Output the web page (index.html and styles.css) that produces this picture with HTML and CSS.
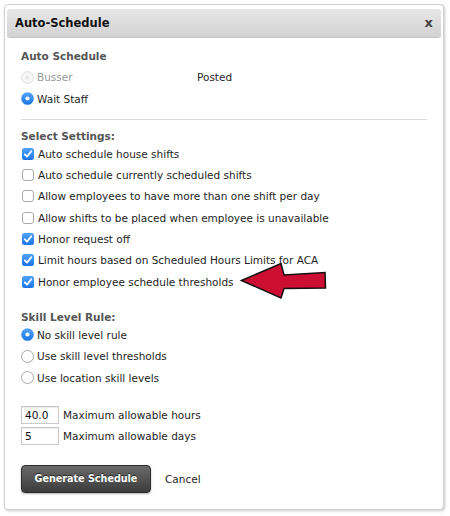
FILE: index.html
```html
<!DOCTYPE html>
<html>
<head>
<meta charset="utf-8">
<link rel="stylesheet" href="styles.css">
</head>
<body>
<div class="dialog">
  <div class="header">
    <span class="title">Auto-Schedule</span>
    <span class="close">x</span>
  </div>
  <div class="content">
    <h2 class="heading">Auto Schedule</h2>
    <div class="group first">
      <div class="row">
        <svg class="radio" viewBox="0 0 13 13"><circle cx="6.5" cy="6.5" r="6" fill="#f6f6f6" stroke="#e0e0e0"/><circle cx="6.5" cy="6.5" r="2" fill="#e8e8e8"/></svg>
        <span class="label muted wide">Busser</span>
        <span class="label">Posted</span>
      </div>
      <div class="row">
        <svg class="radio" viewBox="0 0 13 13"><defs><linearGradient id="rb" x1="0" y1="0" x2="0" y2="1"><stop offset="0" stop-color="#56a6fb"/><stop offset="1" stop-color="#1a74e6"/></linearGradient></defs><circle cx="6.5" cy="6.5" r="6.3" fill="url(#rb)"/><circle cx="6.5" cy="6.5" r="2.1" fill="#fff"/></svg>
        <span class="label">Wait Staff</span>
      </div>
    </div>
    <div class="divider"></div>
    <h2 class="heading">Select Settings:</h2>
    <div class="group">
      <div class="row"><svg class="check" viewBox="0 0 12 12"><defs><linearGradient id="cb" x1="0" y1="0" x2="0" y2="1"><stop offset="0" stop-color="#4fa2fa"/><stop offset="1" stop-color="#1c76e8"/></linearGradient></defs><rect x="0" y="0" width="12" height="12" rx="2.5" fill="url(#cb)"/><path d="M2.8 6.3 L5 8.6 L9.3 3.2" fill="none" stroke="#fff" stroke-width="1.8" stroke-linecap="round" stroke-linejoin="round"/></svg><span class="label">Auto schedule house shifts</span></div>
      <div class="row"><svg class="check" viewBox="0 0 12 12"><rect x="0.5" y="0.5" width="11" height="11" rx="2.5" fill="#fff" stroke="#a9a9a9"/></svg><span class="label">Auto schedule currently scheduled shifts</span></div>
      <div class="row"><svg class="check" viewBox="0 0 12 12"><rect x="0.5" y="0.5" width="11" height="11" rx="2.5" fill="#fff" stroke="#a9a9a9"/></svg><span class="label">Allow employees to have more than one shift per day</span></div>
      <div class="row"><svg class="check" viewBox="0 0 12 12"><rect x="0.5" y="0.5" width="11" height="11" rx="2.5" fill="#fff" stroke="#a9a9a9"/></svg><span class="label">Allow shifts to be placed when employee is unavailable</span></div>
      <div class="row"><svg class="check" viewBox="0 0 12 12"><rect x="0" y="0" width="12" height="12" rx="2.5" fill="url(#cb)"/><path d="M2.8 6.3 L5 8.6 L9.3 3.2" fill="none" stroke="#fff" stroke-width="1.8" stroke-linecap="round" stroke-linejoin="round"/></svg><span class="label">Honor request off</span></div>
      <div class="row"><svg class="check" viewBox="0 0 12 12"><rect x="0" y="0" width="12" height="12" rx="2.5" fill="url(#cb)"/><path d="M2.8 6.3 L5 8.6 L9.3 3.2" fill="none" stroke="#fff" stroke-width="1.8" stroke-linecap="round" stroke-linejoin="round"/></svg><span class="label">Limit hours based on Scheduled Hours Limits for ACA</span></div>
      <div class="row"><svg class="check" viewBox="0 0 12 12"><rect x="0" y="0" width="12" height="12" rx="2.5" fill="url(#cb)"/><path d="M2.8 6.3 L5 8.6 L9.3 3.2" fill="none" stroke="#fff" stroke-width="1.8" stroke-linecap="round" stroke-linejoin="round"/></svg><span class="label">Honor employee schedule thresholds</span></div>
    </div>
    <h2 class="heading skill">Skill Level Rule:</h2>
    <div class="group">
      <div class="row"><svg class="radio" viewBox="0 0 13 13"><circle cx="6.5" cy="6.5" r="6.3" fill="url(#rb)"/><circle cx="6.5" cy="6.5" r="2.1" fill="#fff"/></svg><span class="label">No skill level rule</span></div>
      <div class="row"><svg class="radio" viewBox="0 0 13 13"><circle cx="6.5" cy="6.5" r="6" fill="#fff" stroke="#a9a9a9"/></svg><span class="label">Use skill level thresholds</span></div>
      <div class="row"><svg class="radio" viewBox="0 0 13 13"><circle cx="6.5" cy="6.5" r="6" fill="#fff" stroke="#a9a9a9"/></svg><span class="label">Use location skill levels</span></div>
    </div>
    <div class="limits">
      <div class="limit-row"><span class="input">40.0</span><span class="label">Maximum allowable hours</span></div>
      <div class="limit-row"><span class="input">5</span><span class="label">Maximum allowable days</span></div>
    </div>
    <div class="actions">
      <span class="btn">Generate Schedule</span>
      <span class="cancel">Cancel</span>
    </div>
  </div>
</div>
<svg class="arrow" viewBox="0 0 450 516" width="450" height="516">
  <polygon points="241.5,280.5 281,263.5 284,275 325,272.5 325.5,288 284,288.5 281,298" fill="#cc0e33" stroke="#111" stroke-width="1.5" stroke-linejoin="miter"/>
</svg>
</body>
</html>
```

FILE: styles.css
```css
html, body {
  margin: 0;
  padding: 0;
  background: #fff;
}
body {
  font-family: "DejaVu Sans", Verdana, sans-serif;
  font-size: 10.5px;
  color: #1e1e1e;
  width: 450px;
  height: 516px;
  overflow: hidden;
  position: relative;
}
.dialog {
  margin: 4px 0 0 4px;
  width: 440px;
  height: 506px;
  box-sizing: border-box;
  border: 1px solid #d2d2d2;
  border-radius: 4px;
  box-shadow: 1px 1px 3px rgba(0, 0, 0, 0.22);
  padding: 4px 2px 0 2px;
  background: #fff;
}
.header {
  height: 29px;
  box-sizing: border-box;
  display: flex;
  align-items: center;
  justify-content: space-between;
  padding: 0 8px;
  background: linear-gradient(#e7e7e7, #d2d2d2);
  border-bottom: 1px solid #c4c4c4;
  border-radius: 3px;
}
.title {
  font-weight: bold;
  font-size: 11.5px;
  color: #111;
}
.close {
  font-weight: bold;
  font-size: 13px;
  color: #444;
  line-height: 1;
  margin-top: -1px;
}
.content {
  padding: 11px 14px 0 14px;
}
.heading {
  margin: 0;
  font-size: 10.5px;
  font-weight: bold;
  color: #555;
  line-height: 14px;
  height: 14px;
}
.group.first {
  margin-top: 3.7px;
}
.row {
  height: 21.33px;
  display: flex;
  align-items: center;
}
.radio {
  width: 13px;
  height: 13px;
  flex: none;
  margin-right: 3px;
}
.check {
  width: 12px;
  height: 12px;
  flex: none;
  margin: 0 4px 0 1px;
}
.label {
  white-space: nowrap;
}
.muted {
  color: #9a9a9a;
}
.wide {
  width: 160px;
}
.divider {
  height: 1px;
  background: #dcdcdc;
  margin: 9.7px 0 9px 0;
}
.heading.skill {
  margin-top: 18px;
}
.limits {
  margin-top: 18px;
  display: flex;
  flex-direction: column;
  gap: 2.5px;
}
.limit-row {
  display: flex;
  align-items: center;
  height: 18px;
}
.input {
  width: 38px;
  height: 18px;
  box-sizing: border-box;
  border: 1px solid #c9c9c9;
  box-shadow: inset 0 1px 1px rgba(0, 0, 0, 0.08);
  padding-left: 3px;
  line-height: 16px;
  margin-right: 4px;
  color: #111;
}
.actions {
  margin-top: 20px;
  display: flex;
  align-items: center;
}
.btn {
  width: 130px;
  height: 28px;
  box-sizing: border-box;
  display: flex;
  align-items: center;
  justify-content: center;
  background: linear-gradient(#6a6a6a, #3c3c3c);
  border: 1px solid #2c2c2c;
  border-radius: 4px;
  box-shadow: 0 1px 2px rgba(0, 0, 0, 0.3);
  color: #fff;
  font-weight: bold;
  font-size: 9.6px;
  text-shadow: 0 -1px 0 rgba(0, 0, 0, 0.6);
}
.cancel {
  margin-left: 14px;
  color: #1e1e1e;
}
.arrow {
  position: absolute;
  left: 0;
  top: 0;
  pointer-events: none;
}
```
